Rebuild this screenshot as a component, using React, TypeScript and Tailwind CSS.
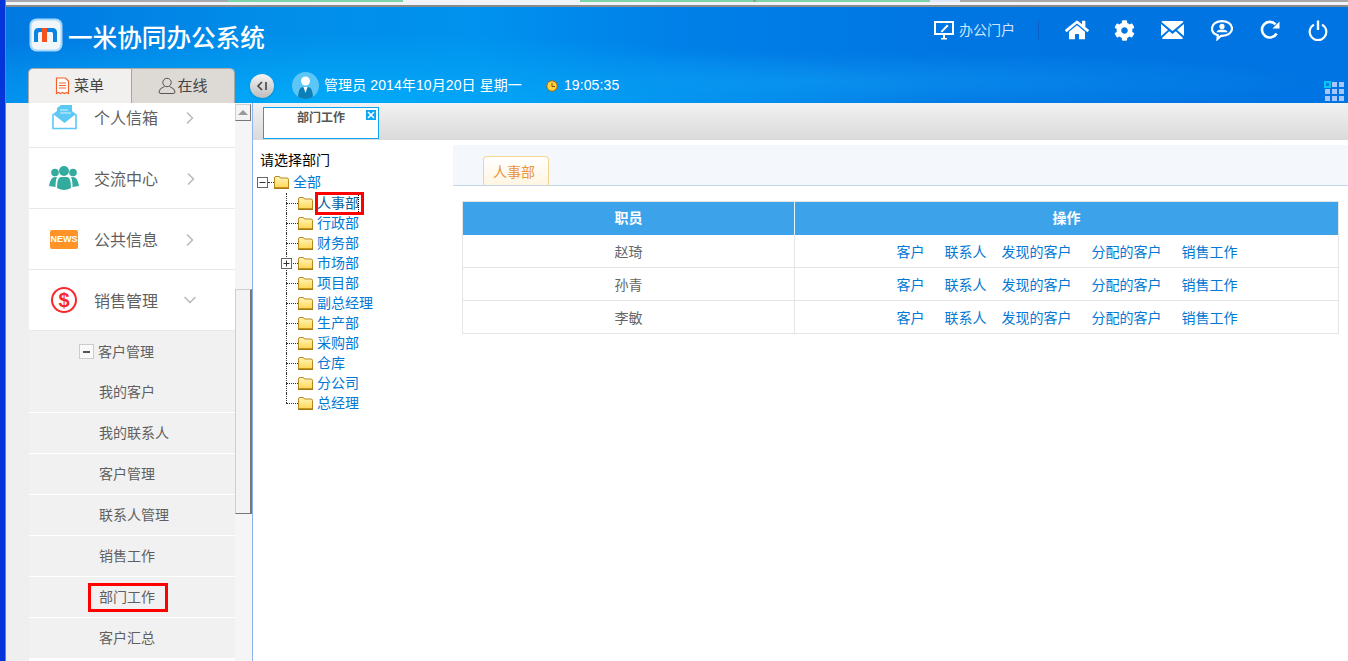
import React from 'react'
import { FaHome, FaCog } from 'react-icons/fa'
import { ChevronRight, ChevronDown } from 'lucide-react'

const departments = ['人事部', '行政部', '财务部', '市场部', '项目部', '副总经理', '生产部', '采购部', '仓库', '分公司', '总经理']
const subMenu = ['我的客户', '我的联系人', '客户管理', '联系人管理', '销售工作', '部门工作', '客户汇总']
const staff = ['赵琦', '孙青', '李敏']

const Logo = () => (
    <svg width="34" height="34" viewBox="0 0 34 34">
        <rect x="0.5" y="0.5" width="33" height="33" rx="7" fill="#a9d8fb" />
        <rect x="2.5" y="2.5" width="29" height="29" rx="5.5" fill="#f1f6fb" />
        <path d="M5 24 V14.5 Q5 10 9.5 10 H13 V14 H10.5 Q9 14 9 15.5 V24 Z" fill="#0a84e0" />
        <path d="M13 10 H18 V24 H13 Z" fill="#f4511e" />
        <path d="M18 10 H23.5 Q28 10 28 14.5 V24 H24 V15.5 Q24 14 22.5 14 H18 Z" fill="#0a84e0" />
    </svg>
)

const Folder = () => (
    <svg width="15" height="13" viewBox="0 0 15 13" className="shrink-0">
        <defs>
            <linearGradient id="folderFill" x1="0" y1="0" x2="0" y2="1">
                <stop offset="0" stopColor="#fff6c0" />
                <stop offset="1" stopColor="#ffd64f" />
            </linearGradient>
        </defs>
        <path d="M0.5 12 V2 Q0.5 0.5 2 0.5 H5 Q6 0.5 6.5 2 H13 Q14.5 2 14.5 3.5 V12 Z" fill="url(#folderFill)" stroke="#b8891c" />
        <rect x="0" y="11.5" width="15" height="1.5" fill="#a87a14" />
    </svg>
)

const TreeBox = ({ open }: { open?: boolean }) => (
    <svg width="11" height="11" viewBox="0 0 11 11" className="shrink-0 bg-white">
        <rect x="0.5" y="0.5" width="10" height="10" fill="#fff" stroke="#666" />
        <path d={open ? 'M2.5 5.5 H8.5' : 'M2.5 5.5 H8.5 M5.5 2.5 V8.5'} stroke="#333" />
    </svg>
)

const OpLink = ({ children, className }: { children: React.ReactNode; className: string }) => (
    <a className={`text-[#0078d4] ${className}`}>{children}</a>
)

export default function App() {
    return (
        <div className="w-[1348px] h-[661px] overflow-hidden flex bg-white text-[14px] font-['Liberation_Sans','Noto_Sans_CJK_SC',sans-serif]">
            {/* window edge */}
            <div className="w-[6px] shrink-0 bg-[#0335d8] border-r border-[#808080]" />

            <div className="flex-1 min-w-0 flex flex-col">
                {/* browser tabs behind the window */}
                <div className="h-[7px] shrink-0 bg-[#f0f4f8] border-b-2 border-[#8a8a8a] flex items-start">
                    <div className="h-[2px] w-[222px] bg-[#a8a8b0]" />
                    <div className="h-[2px] w-[175px] bg-[#7fd1aa]" />
                    <div className="h-[2px] w-[177px]" />
                    <div className="h-[2px] w-[173px] bg-[#7fd1aa]" />
                    <div className="h-[2px] w-[3px] bg-[#999]" />
                    <div className="h-[2px] w-[174px] bg-[#7fd1aa]" />
                    <div className="h-[2px] w-[30px] bg-[#dfe6fb]" />
                    <div className="h-[2px] flex-1 bg-[#a8a8a8]" />
                </div>

                {/* header */}
                <header className="h-[96px] shrink-0 flex flex-col text-white bg-[radial-gradient(ellipse_620px_70px_at_320px_100%,#03aaf8,transparent),radial-gradient(ellipse_520px_30px_at_800px_78%,#0a8cec,transparent),linear-gradient(90deg,#0179e2_0%,#018ee9_20%,#0092ee_35%,#0080e8_50%,#0076e2_70%,#0074e2_100%)]">
                    <div className="h-[61px] flex items-start">
                        <div className="ml-[23px] mt-[11px]"><Logo /></div>
                        <h1 className="ml-[5px] mt-[13px] text-[24.6px] leading-[32px] font-medium font-['Noto_Sans_CJK_SC',sans-serif]">一米协同办公系统</h1>

                        <div className="ml-auto mr-[20px] mt-[11px] flex items-center h-[24px]">
                            <svg width="20" height="20" viewBox="0 0 20 20" fill="none">
                                <path d="M1 2 H19 V14 H1 Z" stroke="#fff" strokeWidth="2" />
                                <path d="M7 18 H13 V19.5 H7 Z M9 14 H11 V18 H9 Z" fill="#fff" />
                                <path d="M7 11 L13 4.5 L14.5 6 L8.5 12 L6.8 12.3 Z" fill="#fff" />
                            </svg>
                            <span className="ml-[5px] text-[#cfe6ff] w-[56px]">办公门户</span>
                            <div className="ml-[23px] mr-[26px] w-px h-[18px] bg-[#0a5fc4]" />
                            <FaHome className="w-[24px] h-[24px]" />
                            <FaCog className="ml-[25px] w-[21px] h-[21px]" />
                            <svg className="ml-[26px]" width="23" height="18" viewBox="0 0 23 18">
                                <path d="M2 0 H21 Q22 0 22.5 1 L11.5 10 L0.5 1 Q1 0 2 0 Z M0 3 L7 9 L0 15 Z M23 3 V15 L16 9 Z M8.2 10.2 L11.5 13 L14.8 10.2 L22 17 Q21.5 18 21 18 H2 Q1.5 18 1 17 Z" fill="#fff" />
                            </svg>
                            <svg className="ml-[27px]" width="22" height="21" viewBox="0 0 22 21" fill="none">
                                <path d="M11 1.2 C16.5 1.2 21 4 21 8.6 C21 13 16.5 15.8 11 15.8 H10 L6.5 19 L6.8 15.2 C3.2 14.2 1 11.8 1 8.6 C1 4 5.5 1.2 11 1.2 Z" stroke="#fff" strokeWidth="2.2" />
                                <circle cx="11" cy="6.4" r="2.6" fill="#fff" />
                                <path d="M5.5 12.2 Q6 9.4 11 9.4 Q16 9.4 16.5 12.2 Z" fill="#fff" />
                            </svg>
                            <svg className="ml-[27px]" width="20" height="20" viewBox="0 0 20 20" fill="none">
                                <path d="M16.6 13.5 A7.8 7.8 0 1 1 15.5 4.4" stroke="#fff" strokeWidth="2.6" />
                                <path d="M19.5 1.5 V8.5 H12.5 Z" fill="#fff" />
                            </svg>
                            <svg className="ml-[28px]" width="20" height="21" viewBox="0 0 20 21" fill="none">
                                <path d="M6 4.6 A8.3 8.3 0 1 0 14 4.6" stroke="#fff" strokeWidth="2.2" />
                                <path d="M10 0.5 V10" stroke="#fff" strokeWidth="2.4" />
                            </svg>
                        </div>
                    </div>

                    <div className="h-[35px] flex items-center">
                        <div className="ml-[22px] self-end w-[207px] h-[35px] flex rounded-t-[5px] overflow-hidden border-t border-x border-[#a9a9a9] text-[15px] text-[#444]">
                            <div className="w-[103px] bg-[#f2f0ee] flex items-center justify-center gap-[4px] pr-[1px] border-r border-[#a9a49e]">
                                <svg width="15" height="18" viewBox="0 0 15 18" fill="none">
                                    <path d="M1.5 1 H10.5 L13.5 4 V16.5 L11.5 15.5 L9.5 16.5 L7.5 15.5 L5.5 16.5 L3.5 15.5 L1.5 16.5 Z" stroke="#f4622a" strokeWidth="1.2" fill="#fff" />
                                    <path d="M4 6 H11 M4 8.5 H11 M4 11 H11" stroke="#f4622a" />
                                </svg>
                                <span>菜单</span>
                            </div>
                            <div className="flex-1 bg-[#ddd9d5] flex items-center justify-center gap-px">
                                <svg width="18" height="18" viewBox="0 0 18 18" fill="none">
                                    <circle cx="9" cy="5.5" r="4.2" stroke="#555" />
                                    <path d="M6.5 9.5 Q1 11.5 1 15 Q1 16.5 3 16.5 H15 Q17 16.5 17 15 Q17 11.5 11.5 9.5" stroke="#555" />
                                </svg>
                                <span>在线</span>
                            </div>
                        </div>

                        <div className="ml-[15px] w-[24px] h-[24px] rounded-full bg-gradient-to-b from-[#f4f4f4] to-[#bdbdbd] flex items-center justify-center shadow-sm">
                            <svg width="12" height="10" viewBox="0 0 12 10" fill="none">
                                <path d="M6 1 L2 5 L6 9 M10 1 V9" stroke="#444" strokeWidth="1.6" />
                            </svg>
                        </div>
                        <div className="ml-[18px] w-[27px] h-[27px] rounded-full bg-[#5cc6f6] overflow-hidden">
                            <svg width="27" height="27" viewBox="0 0 27 27">
                                <circle cx="13.5" cy="9" r="4.5" fill="#fff" />
                                <path d="M6 27 Q6 15 11 15 L13.5 17 L16 15 Q21 15 21 27 Z" fill="#0d7fb8" />
                                <path d="M11.5 15 L13.5 21 L15.5 15 Z" fill="#fff" />
                            </svg>
                        </div>
                        <span className="ml-[5px] whitespace-nowrap tracking-[0.1px]">管理员 2014年10月20日 星期一</span>
                        <svg className="ml-[24px]" width="12" height="12" viewBox="0 0 12 12" fill="none">
                            <circle cx="6" cy="6" r="5.2" fill="#ffd23c" stroke="#a8641a" />
                            <path d="M6 3 V6.5 H9" stroke="#7a4a10" />
                        </svg>
                        <span className="ml-[6px] tracking-[0.1px]">19:05:35</span>

                        <div className="ml-auto mr-[4px] self-end mb-[2px] grid grid-cols-3 gap-[2px]">
                            <div className="w-[7px] h-[7px] -m-px border-2 border-[#06c6f6] bg-[#0a7ce4]" />
                            {[...Array(8)].map((_, i) => (
                                <div key={i} className="w-[5px] h-[5px] bg-[#a8c6fb]" />
                            ))}
                        </div>
                    </div>
                </header>

                <div className="flex-1 min-h-0 flex">
                    {/* left gutter + menu */}
                    <div className="w-[23px] shrink-0 bg-[#efefef]" />
                    <aside className="w-[206px] shrink-0 overflow-hidden bg-white text-[#5f5f5f]">
                        <div className="-mt-[16px]">
                            <div className="h-[61px] border-b border-[#e8e8e8] flex items-center">
                                <svg className="ml-[23px] w-[25px]" width="25" height="26" viewBox="0 0 25 26" fill="none">
                                    <path d="M1 10 V24.5 H24 V10" stroke="#5cc8f5" strokeWidth="1.6" fill="#fff" />
                                    <path d="M1 10 L12.5 19 L24 10 L20 7 V1 H9 L5 4 V7 Z" fill="#5cc8f5" />
                                    <path d="M8 6 H16 M8 9 H19" stroke="#d5f2fd" />
                                </svg>
                                <span className="ml-[17px] mt-[4px] text-[16px] w-[64px]">个人信箱</span>
                                <ChevronRight className="ml-[22px] mt-[2px] w-[20px] h-[20px] text-[#bbbbbb]" strokeWidth={2} />
                            </div>
                            <div className="h-[61px] border-b border-[#e8e8e8] flex items-center">
                                <svg className="ml-[20px] w-[30px]" width="30" height="25" viewBox="0 0 30 25" fill="#34ab9f">
                                    <circle cx="6" cy="6.5" r="3.8" />
                                    <circle cx="24" cy="6.5" r="3.8" />
                                    <circle cx="15" cy="5" r="5" />
                                    <path d="M0 20 Q1.5 11 6 11 H8 Q6.5 14 6.5 21 Z M30 20 Q28.5 11 24 11 H22 Q23.5 14 23.5 21 Z" />
                                    <path d="M8 22 Q8 11 12 11 H18 Q22 11 22 22 Q15 26 8 22 Z" />
                                </svg>
                                <span className="ml-[15px] mt-[4px] text-[16px] w-[64px]">交流中心</span>
                                <ChevronRight className="ml-[23px] mt-[2px] w-[20px] h-[20px] text-[#bbbbbb]" strokeWidth={2} />
                            </div>
                            <div className="h-[61px] border-b border-[#e8e8e8] flex items-center">
                                <div className="ml-[21px] w-[28px] h-[19px] rounded-[2px] bg-[#ff9327] flex items-center justify-center text-white text-[9px] font-bold leading-none">NEWS</div>
                                <span className="ml-[16px] mt-[4px] text-[16px] w-[64px]">公共信息</span>
                                <ChevronRight className="ml-[22px] mt-[2px] w-[20px] h-[20px] text-[#bbbbbb]" strokeWidth={2} />
                            </div>
                            <div className="h-[61px] border-b border-[#e8e8e8] flex items-center">
                                <div className="ml-[22px] w-[26px] h-[26px] rounded-full border-2 border-[#f8282c] flex items-center justify-center text-[#f8282c] text-[20px] font-bold leading-none">$</div>
                                <span className="ml-[17px] mt-[4px] text-[16px] w-[64px]">销售管理</span>
                                <ChevronDown className="ml-[22px] w-[20px] h-[20px] text-[#bbbbbb]" strokeWidth={2} />
                            </div>
                        </div>

                        <div className="bg-[#f1f1f1]">
                            <div className="h-[41px] flex items-center">
                                <div className="ml-[50px] w-[15px] h-[15px] bg-[#fafafa] border border-[#cccccc] flex items-center justify-center">
                                    <div className="w-[7px] h-[2px] bg-[#555]" />
                                </div>
                                <span className="ml-[4px] mt-[2px]">客户管理</span>
                            </div>
                            {subMenu.map((name) => (
                                <div key={name} className="relative h-[41px] flex items-center pl-[70px] border-b border-white">
                                    {name}
                                    {name === '部门工作' && (
                                        <div className="absolute left-[59px] top-[6px] w-[80px] h-[29px] border-[3px] border-[#ff0000]" />
                                    )}
                                </div>
                            ))}
                        </div>
                    </aside>

                    {/* scrollbar */}
                    <div className="w-[17px] shrink-0 bg-[#f5f5f5] flex flex-col">
                        <div className="h-[17px] w-[16px] mt-px bg-[#f3f3f3] border border-[#cfcfcf] border-b-[#777] border-r-[#777] flex items-center justify-center">
                            <div className="w-0 h-0 border-x-[5px] border-x-transparent border-b-[5px] border-b-[#999]" />
                        </div>
                        <div className="mt-[168px] h-[225px] w-[17px] bg-[#f3f3f3] border border-[#cfcfcf] border-b-[#777] border-r-[#777] border-r-2" />
                    </div>

                    {/* main panel */}
                    <main className="flex-1 min-w-0 flex flex-col border-l border-[#8ab4ee]">
                        <div className="h-[37px] shrink-0 bg-gradient-to-b from-[#f2f2f2] to-[#dadada] pl-[10px] pt-[4px]">
                            <div className="relative w-[116px] h-[32px] bg-white border border-[#0aa6f2] text-center text-[12px] leading-[21px] font-bold text-[#555]">
                                部门工作
                                <div className="absolute right-[2px] top-[2px] w-[10px] h-[10px] bg-[#0aa6f2] flex items-center justify-center">
                                    <svg width="8" height="8" viewBox="0 0 8 8"><path d="M1 1 L7 7 M7 1 L1 7" stroke="#fff" strokeWidth="1.6" /></svg>
                                </div>
                            </div>
                        </div>

                        <div className="flex-1 min-h-0 flex">
                            {/* department tree */}
                            <div className="w-[200px] shrink-0 pt-[10px]">
                                <div className="ml-[7px] h-[20px] leading-[20px] text-black">请选择部门</div>
                                <div className="mt-[2px] h-[20px] flex items-center pl-[4px]">
                                    <TreeBox open />
                                    <div className="w-[6px] border-b border-dotted border-[#333]" />
                                    <Folder />
                                    <span className="ml-[4px] text-[#0078d4]">全部</span>
                                </div>
                                <div className="mt-px ml-[33px]">
                                    {departments.map((name, i) => (
                                        <div key={name} className="relative h-[20px] flex items-center">
                                            <div className="w-[12px] h-full shrink-0">
                                                <div className={`h-full ${i === departments.length - 1 ? 'border-transparent' : 'border-[#333]'} border-l border-dotted`} />
                                            </div>
                                            <div className="absolute left-0 top-0 h-[10px] border-l border-dotted border-[#333]" />
                                            <div className="absolute left-0 top-[10px] w-[12px] border-b border-dotted border-[#333]" />
                                            {name === '市场部' && (
                                                <div className="absolute left-[-5px] top-[5px] flex"><TreeBox /></div>
                                            )}
                                            <Folder />
                                            <span className={`ml-[4px] whitespace-nowrap ${i === 0 ? 'text-[#05609f] outline-1 outline-dotted outline-black -outline-offset-1' : 'text-[#0078d4]'}`}>{name}</span>
                                            {i === 0 && (
                                                <div className="absolute left-[29px] top-[-1px] w-[49px] h-[23px] border-[3px] border-[#ff0000]" />
                                            )}
                                        </div>
                                    ))}
                                </div>
                            </div>

                            {/* right side */}
                            <div className="flex-1 min-w-0">
                                <div className="mt-[5px] h-[41px] bg-[#f4f7fb] border-b border-[#c5d5e8] flex items-end pl-[30px]">
                                    <div className="w-[66px] h-[30px] -mb-px pr-[4px] rounded-t-[4px] border border-[#f3d68e] border-b-[#c5d5e8] bg-gradient-to-b from-white to-[#fff5e2] text-center leading-[30px] text-[#e8953c]">人事部</div>
                                </div>

                                <table className="ml-[9px] mt-[15px] w-[877px] table-fixed border-separate border-spacing-0 border border-[#e5e5e5] text-[#666]">
                                    <thead>
                                        <tr className="h-[33px] bg-[#3ca2ea] text-white">
                                            <th className="w-[332px] p-0 border-r border-[#e8f3fc] font-bold text-center">职员</th>
                                            <th className="p-0 font-bold text-center">操作</th>
                                        </tr>
                                    </thead>
                                    <tbody>
                                        {staff.map((name, i) => (
                                            <tr key={name} className={i < staff.length - 1 ? 'h-[33px]' : 'h-[32px]'}>
                                                <td className={`p-0 pt-[2px] border-r border-[#e5e5e5] text-center ${i < staff.length - 1 ? 'border-b' : ''}`}>{name}</td>
                                                <td className={`p-0 pt-[2px] border-[#e5e5e5] ${i < staff.length - 1 ? 'border-b' : ''}`}>
                                                    <div className="flex justify-center pl-[1px]">
                                                        <OpLink className="">客户</OpLink>
                                                        <OpLink className="ml-[20px]">联系人</OpLink>
                                                        <OpLink className="ml-[15px]">发现的客户</OpLink>
                                                        <OpLink className="ml-[20px]">分配的客户</OpLink>
                                                        <OpLink className="ml-[20px]">销售工作</OpLink>
                                                    </div>
                                                </td>
                                            </tr>
                                        ))}
                                    </tbody>
                                </table>
                            </div>
                        </div>
                    </main>
                </div>
            </div>
        </div>
    )
}
